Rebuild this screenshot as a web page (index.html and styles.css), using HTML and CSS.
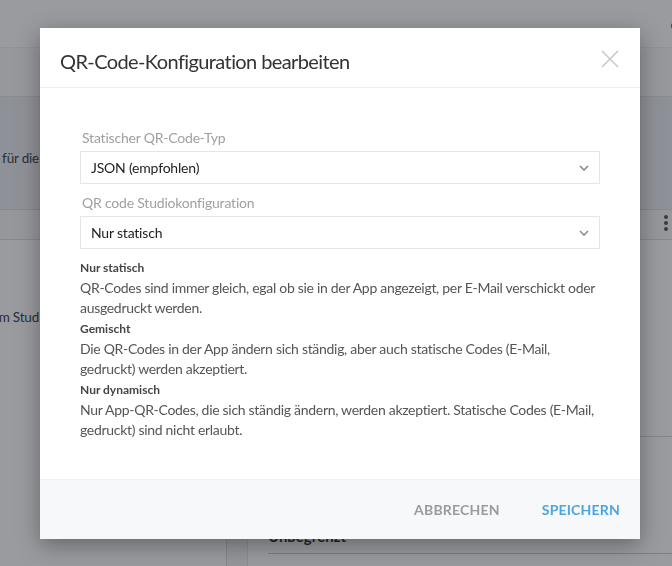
FILE: index.html
```html
<!DOCTYPE html>
<html lang="de">
<head>
  <meta charset="UTF-8" />
  <meta name="viewport" content="width=device-width, initial-scale=1.0" />
  <title>QR-Code-Konfiguration</title>
  <link rel="stylesheet" href="styles.css">
</head>
<body>
  <div class="page">
    <div class="topbar">
      <span class="user">eva</span>
    </div>
    <div class="subbar"></div>
    <div class="band">
      <div class="clip"><span>Kontingent für die</span></div>
    </div>
    <div class="row">
      <div class="kebab"><i></i><i></i><i></i></div>
    </div>
    <div class="content">
      <div class="side">
        <div class="clip"><span>Zugang zum Stud</span></div>
      </div>
      <div class="rail"></div>
      <div class="main">
        <div class="main-top"></div>
        <div class="main-row"><b>Unbegrenzt</b></div>
      </div>
    </div>
  </div>

  <div class="overlay">
    <div class="modal">
      <div class="modal-header">
        <h2>QR-Code-Konfiguration bearbeiten</h2>
        <button class="close" aria-label="Schließen">
          <svg width="18" height="18" viewBox="0 0 18 18"><path d="M1 1L17 17M17 1L1 17" stroke="#c8c8c8" stroke-width="1.6" fill="none"/></svg>
        </button>
      </div>

      <div class="modal-body">
        <label class="field-label">Statischer QR-Code-Typ</label>
        <div class="select">
          <span>JSON (empfohlen)</span>
          <svg class="chevron" width="10" height="6" viewBox="0 0 10 6"><path d="M1 1L5 5L9 1" stroke="#8a8a8a" stroke-width="1.6" fill="none"/></svg>
        </div>

        <label class="field-label">QR code Studiokonfiguration</label>
        <div class="select">
          <span>Nur statisch</span>
          <svg class="chevron" width="10" height="6" viewBox="0 0 10 6"><path d="M1 1L5 5L9 1" stroke="#8a8a8a" stroke-width="1.6" fill="none"/></svg>
        </div>

        <div class="help">
          <h4>Nur statisch</h4>
          <p>QR-Codes sind immer gleich, egal ob sie in der App angezeigt, per E-Mail verschickt oder ausgedruckt werden.</p>
          <h4>Gemischt</h4>
          <p>Die QR-Codes in der App ändern sich ständig, aber auch statische Codes (E-Mail, gedruckt) werden akzeptiert.</p>
          <h4>Nur dynamisch</h4>
          <p>Nur App-QR-Codes, die sich ständig ändern, werden akzeptiert. Statische Codes (E-Mail, gedruckt) sind nicht erlaubt.</p>
        </div>
      </div>

      <div class="modal-footer">
        <button class="btn">Abbrechen</button>
        <button class="btn primary">Speichern</button>
      </div>
    </div>
  </div>
</body>
</html>
```

FILE: styles.css
```css
body {
  margin: 0;
  font-family: Lato, "Open Sans", sans-serif;
  color: #333;
  background: #fff;
  overflow: hidden;
}
.page {
  height: 566px;
  display: flex;
  flex-direction: column;
}
.topbar {
  height: 47px;
  border-bottom: 1px solid #f0f0f0;
  display: flex;
  justify-content: flex-end;
  align-items: center;
  overflow: hidden;
}
.user {
  font-size: 15px;
  font-weight: bold;
  color: #222;
  margin-right: -22px;
}
.subbar {
  height: 48px;
  background: #fafafa;
  border-bottom: 1px solid #e2e3e6;
}
.band {
  height: 112px;
  background: #eceef2;
  border-bottom: 1px solid #dcdde0;
  display: flex;
  align-items: center;
}
.band .clip {
  margin-top: 10px;
}
.clip {
  width: 39px;
  overflow: hidden;
  display: flex;
  justify-content: flex-end;
  white-space: nowrap;
  font-size: 13.5px;
  letter-spacing: -0.2px;
  color: #3a3d45;
}
.row {
  height: 29px;
  border-bottom: 1px solid #dcdde0;
  background: #f8f8f8;
  display: flex;
  justify-content: flex-end;
  align-items: center;
}
.kebab {
  display: flex;
  flex-direction: column;
  gap: 2px;
  margin-right: 4px;
  margin-top: -4px;
}
.kebab i {
  width: 4px;
  height: 4px;
  border-radius: 50%;
  background: #555;
}
.content {
  flex: 1;
  display: flex;
}
.side {
  width: 226px;
  border-right: 1px solid #dcdde0;
  padding-top: 69px;
}
.rail {
  width: 20px;
  background: #f6f6f7;
  border-right: 1px solid #e2e3e6;
}
.main {
  flex: 1;
  padding-left: 20px;
}
.main-top {
  height: 196px;
  border-bottom: 1px solid #d6d7da;
}
.main-row {
  height: 117px;
  border-bottom: 1px solid #c9cacd;
  display: flex;
  align-items: flex-end;
  padding-bottom: 8px;
  box-sizing: border-box;
  font-size: 15px;
  color: #333;
}

.overlay {
  position: fixed;
  inset: 0;
  background: rgba(24, 28, 36, 0.44);
  padding: 28px 0 0 40px;
}
.modal {
  width: 600px;
  background: #fff;
  box-shadow: 0 6px 22px rgba(0, 0, 0, 0.35);
}
.modal-header {
  height: 59px;
  border-bottom: 1px solid #eeeeee;
  display: flex;
  align-items: center;
  justify-content: space-between;
  padding: 0 20px;
}
.modal-header h2 {
  margin: 0;
  margin-top: 6px;
  font-size: 20px;
  font-weight: normal;
  color: #333;
  letter-spacing: -0.6px;
}
.close {
  border: 0;
  background: none;
  padding: 0;
  margin-top: 2px;
  margin-right: 1px;
  display: flex;
}
.modal-body {
  padding: 40px 40px 38px;
}
.field-label {
  display: block;
  font-size: 14px;
  line-height: 20px;
  color: #a0a0a0;
  margin-left: 2px;
  margin-bottom: 3px;
  letter-spacing: -0.2px;
}
.select {
  height: 33px;
  box-sizing: border-box;
  border: 1px solid #e6e6e6;
  display: flex;
  align-items: center;
  justify-content: space-between;
  padding: 0 10px 0 10px;
  font-size: 14px;
  color: #222;
  margin-bottom: 9px;
  letter-spacing: -0.2px;
}
.chevron {
  margin-top: 1px;
}
.help h4 {
  margin: 0;
  font-size: 12px;
  line-height: 20px;
  font-weight: bold;
  color: #444;
}
.help p {
  margin: 0 0 1px;
  font-size: 14px;
  line-height: 20px;
  color: #555;
  letter-spacing: -0.3px;
}
.modal-footer {
  height: 59px;
  background: #f7f8fa;
  border-top: 1px solid #eff0f2;
  display: flex;
  justify-content: flex-end;
  align-items: center;
  gap: 42px;
  padding: 0 20px;
}
.btn {
  border: 0;
  background: none;
  padding: 0;
  font-family: inherit;
  font-size: 14px;
  font-weight: bold;
  text-transform: uppercase;
  color: #9b9b9b;
  letter-spacing: 0.2px;
}
.btn.primary {
  color: #4ba6df;
}
```
